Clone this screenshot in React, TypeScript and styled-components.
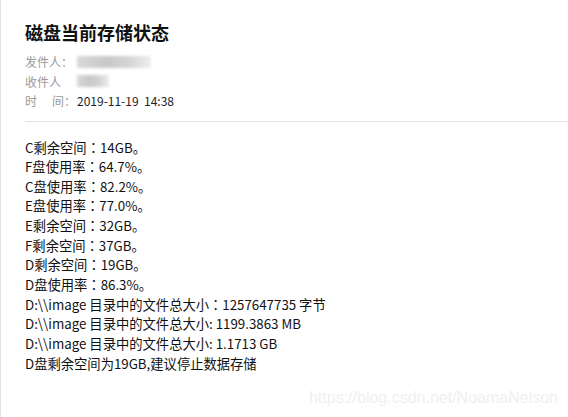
import styled, { createGlobalStyle } from "styled-components";

const GlobalStyle = createGlobalStyle`
  body {
    margin: 0;
    background: #fff;
    font-family: "Noto Sans CJK SC", "Noto Sans", sans-serif;
  }
`;

const Page = styled.div`
  position: relative;
  min-height: 417px;
  border-left: 1px solid #dce3ea;
  box-sizing: border-box;
  overflow: hidden;
`;

const Header = styled.div`
  padding: 20px 0 0 24px;
`;

const Title = styled.h1`
  margin: 0;
  font-size: 18px;
  line-height: 24px;
  font-weight: 700;
  color: #111;
`;

const Meta = styled.div`
  margin-top: 8px;
`;

const MetaRow = styled.div`
  display: flex;
  align-items: center;
  height: 19.5px;
  font-size: 12px;
`;

const Label = styled.span`
  display: flex;
  width: 52px;
  color: #9a9a9a;
  white-space: pre;
`;

const Gap = styled.span`
  width: 15px;
`;

const Value = styled.span`
  color: #222;
  white-space: pre;
`;

const Blur = styled.span<{ w: number }>`
  display: inline-block;
  width: ${(p) => p.w}px;
  height: 12px;
  background: linear-gradient(90deg, #d8d8d8, #c8c8c8 40%, #d4d4d4 70%, #eee);
  filter: blur(1.5px);
`;

const Divider = styled.hr`
  margin: 10px 0 0 24px;
  border: 0;
  border-top: 1px solid #e2e2e2;
`;

const Body = styled.div`
  padding: 16px 0 0 24px;
  font-family: "Noto Sans CJK SC", sans-serif;
  font-size: 13.3px;
  line-height: 19.64px;
  color: #111;
`;

const Line = styled.div`
  white-space: pre;
`;

// the JP cut draws the full-width colon centred in its cell, as in the screenshot
const Colon = styled.span`
  font-family: "Noto Sans CJK JP", sans-serif;
`;

const Watermark = styled.div`
  position: absolute;
  right: 10px;
  bottom: 10px;
  font-family: "Liberation Sans", Arial, sans-serif;
  font-size: 16px;
  color: #f0f0f0;
`;

const lines = [
  "C剩余空间：14GB。",
  "F盘使用率：64.7%。",
  "C盘使用率：82.2%。",
  "E盘使用率：77.0%。",
  "E剩余空间：32GB。",
  "F剩余空间：37GB。",
  "D剩余空间：19GB。",
  "D盘使用率：86.3%。",
  "D:\\\\image 目录中的文件总大小：1257647735 字节",
  "D:\\\\image 目录中的文件总大小: 1199.3863 MB",
  "D:\\\\image 目录中的文件总大小: 1.1713 GB",
  "D盘剩余空间为19GB,建议停止数据存储",
];

function TextLine({ text }: { text: string }) {
  const parts = text.split("：");
  return (
    <Line>
      {parts.map((p, i) => (
        <span key={i}>
          {i > 0 && <Colon>：</Colon>}
          {p}
        </span>
      ))}
    </Line>
  );
}

export default function App() {
  return (
    <Page>
      <GlobalStyle />
      <Header>
        <Title>磁盘当前存储状态</Title>
        <Meta>
          <MetaRow>
            <Label>发件人：</Label>
            <Blur w={74} />
          </MetaRow>
          <MetaRow>
            <Label>收件人</Label>
            <Blur w={32} />
          </MetaRow>
          <MetaRow>
            <Label>
              时<Gap />间：
            </Label>
            <Value>2019-11-19  14:38</Value>
          </MetaRow>
        </Meta>
      </Header>
      <Divider />
      <Body>
        {lines.map((l) => (
          <TextLine key={l} text={l} />
        ))}
      </Body>
      <Watermark>https://blog.csdn.net/NoamaNelson</Watermark>
    </Page>
  );
}
